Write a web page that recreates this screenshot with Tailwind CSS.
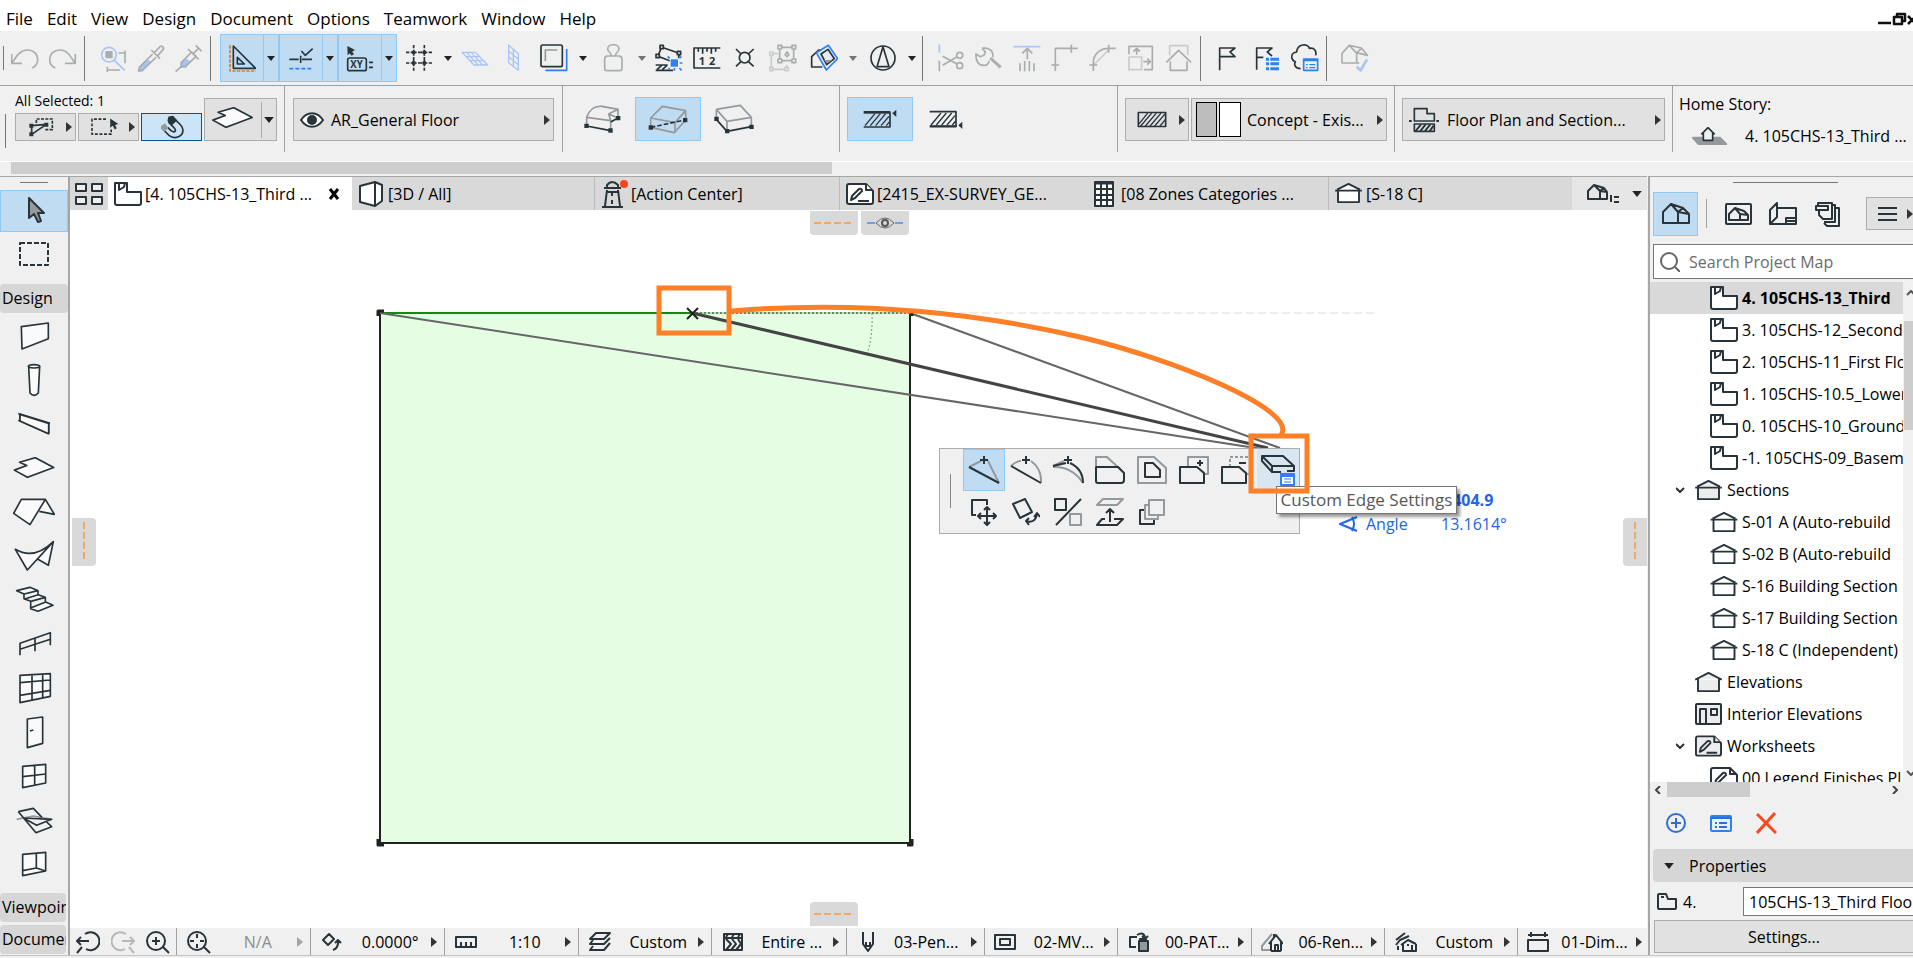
<!DOCTYPE html>
<html lang="en">
<head>
  <meta charset="UTF-8">
  <meta name="viewport" content="width=device-width, initial-scale=1.0">
  <title>Floor Plan</title>
  <script src="https://cdn.jsdelivr.net/npm/@tailwindcss/browser@4"></script>
</head>
<body class="h-screen flex flex-col overflow-hidden bg-[#f0f0f0] text-black text-base leading-6 whitespace-nowrap font-['Open_Sans','Noto_Sans',sans-serif] fill-none stroke-[#28343a] stroke-[5] [stroke-linejoin:round]">

  <!-- Shared icons -->
  <svg class="hidden">
    <symbol id="down" viewBox="0 0 8 5"><path d="M0 0H8L4 5Z" fill="#222" stroke="none"/></symbol>
    <symbol id="right" viewBox="0 0 6 10"><path d="M0 0L6 5L0 10Z" fill="#333" stroke="none"/></symbol>
    <symbol id="story" viewBox="0 0 28 24"><path d="M1 1H13V10H27V21Q27 23 25 23H3Q1 23 1 21Z" fill="#fff" stroke-width="2"/><path d="M5 1V8L10 5L11 1" stroke-width="2"/></symbol>
    <symbol id="section" viewBox="0 0 28 22"><path d="M3 8V20H25V8" stroke-width="2"/><path d="M0 8H28M2 7L14 1L26 7" stroke-width="2"/></symbol>
    <symbol id="sheet" viewBox="0 0 28 22"><path d="M3 1H20L27 8V19Q27 21 25 21H3Q1 21 1 19V3Q1 1 3 1Z" stroke-width="2"/><path d="M20 1V7H26M12 18H23" stroke-width="2"/><path d="M5 17L6 13L13 6Q16 5 16 8L9 15Z" stroke-width="2"/></symbol>
    <symbol id="home" viewBox="0 0 28 21"><path d="M1 20V9L9 1L16 9V20ZM9 1L21 5L27 11V20H16M16 9L27 11M16 9L21 5" stroke-width="2"/></symbol>
    <symbol id="slab" viewBox="40 738 124 64"><path d="M42 778L80 764L58 754L106 740L162 770L82 800Z" fill="#fafafa"/></symbol>
  </svg>

  <!-- Menu bar -->
  <header class="h-[31px] shrink-0 bg-white flex items-center justify-between pt-[6px] text-[17px]">
    <nav class="flex gap-[14px] pl-[6px]">
      <a href="#">File</a>
      <a href="#">Edit</a>
      <a href="#">View</a>
      <a href="#">Design</a>
      <a href="#">Document</a>
      <a href="#">Options</a>
      <a href="#">Teamwork</a>
      <a href="#">Window</a>
      <a href="#">Help</a>
    </nav>
    <button aria-label="Window controls">
      <svg class="w-[35px] h-4" viewBox="0 0 35 16"><path d="M0 12H13M16 6H24V13H16ZM19 6V3H27V10H24M30 5L38 13M38 5L30 13" stroke="#111" stroke-width="2.5"/></svg>
    </button>
  </header>

  <!-- Toolbar -->
  <div class="h-[54px] shrink-0 flex items-center">
    <div class="w-[6px] pl-[3px]"><div class="w-px h-6 bg-[#777]"></div></div>
    <button aria-label="Undo" class="w-[38px] h-12 grid place-items-center"><svg class="size-7 stroke-[#a9adae]" viewBox="33 132 84 84"><path d="M35 162V190H66M36 189C50 168 60 150 82 150C100 150 113 162 113 178C113 190 106 200 96 204"/></svg></button>
    <button aria-label="Redo" class="w-[38px] h-12 grid place-items-center"><svg class="size-7 stroke-[#a9adae]" viewBox="147 132 84 84"><path d="M226 162V190H195M225 189C211 168 200 150 182 150C162 150 149 162 149 178C149 190 155 200 166 204"/></svg></button>
    <div class="w-3 pl-[2px]"><div class="w-px h-[45px] bg-[#777]"></div></div>
    <button aria-label="Find and select" class="w-[38px] h-12 grid place-items-center"><svg class="size-7 stroke-[#a9adae]" viewBox="297 132 84 84"><circle cx="327" cy="164" r="22" stroke="#a8c5f5"/><path d="M343 181L374 211" stroke="#a8c5f5"/><rect x="316" y="153" width="22" height="22" rx="3" fill="#a9adae" stroke="none"/><path d="M356 159H376M375 152V190M322 210H360M322 200V216"/></svg></button>
    <button aria-label="Pick up parameters" class="w-[38px] h-12 grid place-items-center"><svg class="size-7 stroke-[#a9adae]" viewBox="411 132 84 84"><path d="M416 213L420 201L440 180L450 186L426 212Z" fill="#a8c5f5" stroke="#a8c5f5"/><path d="M458 162L418 202L416 213L427 211L468 172M454 150L480 176M463 158L478 142C484 134 494 142 489 149L473 167"/></svg></button>
    <button aria-label="Inject parameters" class="w-[38px] h-12 grid place-items-center"><svg class="size-7 stroke-[#a9adae]" viewBox="525 132 84 84"><path d="M543 201L544 188L556 178L570 186L556 201Z" fill="#a8c5f5" stroke="#a8c5f5"/><path d="M527 215L544 199M544 199V188L575 156L588 169L556 200H544M564 147L596 178M580 161L598 143M587 136L605 154"/></svg></button>
    <div class="w-3 pl-[2px]"><div class="w-px h-[45px] bg-[#777]"></div></div>

    <div class="flex h-12 w-[59px] bg-[#c0dcf3] border border-[#90c8f6]">
      <button aria-label="Guide lines" class="w-[42px] grid place-items-center"><svg class="size-7" viewBox="685 132 84 84"><path d="M701 138L768 205H701ZM713 172L734 192H713Z"/><path d="M691 136V213H770" stroke="#df7b22" stroke-dasharray="10 4"/></svg></button>
      <button aria-label="Guide line options" class="flex-1 grid place-items-center border-l border-[#90c8f6]"><svg class="w-2 h-[5px]"><use href="#down"/></svg></button>
    </div>
    <div class="flex h-12 w-[59px] bg-[#c0dcf3] border border-[#90c8f6]">
      <button aria-label="Snap guides" class="w-[42px] grid place-items-center"><svg class="size-7" viewBox="865 132 84 84"><path d="M872 178H900M910 178H940M906 167V189M908 153L920 166L942 146"/><path d="M872 206H944" stroke="#2f80f5" stroke-dasharray="12 6"/></svg></button>
      <button aria-label="Snap guide options" class="flex-1 grid place-items-center border-l border-[#90c8f6]"><svg class="w-2 h-[5px]"><use href="#down"/></svg></button>
    </div>
    <div class="flex h-12 w-[59px] bg-[#c0dcf3] border border-[#90c8f6]">
      <button aria-label="Coordinates" class="w-[42px] grid place-items-center"><svg class="size-7" viewBox="1045 132 84 84"><path d="M1049 138L1050 166L1056 160L1062 167L1069 162L1063 155L1072 150Z" fill="#28343a" stroke="none"/><rect x="1050" y="174" width="56" height="38" rx="6"/><text x="1058" y="203" font-size="29" font-weight="700" fill="#28343a" stroke="none">XY</text><path d="M1114 187H1126M1114 202H1126"/></svg></button>
      <button aria-label="Coordinate options" class="flex-1 grid place-items-center border-l border-[#90c8f6]"><svg class="w-2 h-[5px]"><use href="#down"/></svg></button>
    </div>
    <button aria-label="Grid display" class="w-[43px] h-12 grid place-items-center"><svg class="size-7" viewBox="1217 134 84 84"><path d="M1220 159H1298M1220 191H1298M1243 137V214M1275 137V214" stroke-dasharray="10 4 18 4 14 4"/><path d="M1238 154h10v10h-10zM1270 154h10v10h-10zM1238 186h10v10h-10zM1270 186h10v10h-10z" fill="#28343a" stroke="none"/></svg></button>
    <button aria-label="Grid options" class="w-4 h-12 grid place-items-center"><svg class="w-2 h-[5px]"><use href="#down"/></svg></button>
    <button aria-label="Editing plane" class="w-[38px] h-12 grid place-items-center"><svg class="size-7 stroke-[#a8c5f5] stroke-[4]" viewBox="1383 134 84 84"><path d="M1386 159H1426L1463 197H1422ZM1398 172H1438M1409 184H1450M1400 159L1434 197M1413 159L1448 197"/></svg></button>
    <button aria-label="Vertical plane" class="w-[38px] h-12 grid place-items-center"><svg class="size-7 stroke-[#a8c5f5] stroke-[4]" viewBox="58 134 84 84"><path d="M87 137L116 163V213L87 190ZM101 150V202M87 155L116 180M87 172L116 197"/></svg></button>
    <button aria-label="Trace" class="w-[43px] h-12 grid place-items-center"><svg class="size-7" viewBox="182 134 84 84"><path d="M262 149V213H198" stroke="#2f80f5"/><rect x="185" y="137" width="64" height="65" rx="5"/><path d="M198 185V152H234" stroke="#93999c"/></svg></button>
    <button aria-label="Trace options" class="w-4 h-12 grid place-items-center"><svg class="w-2 h-[5px]"><use href="#down"/></svg></button>
    <button aria-label="Gravity" class="w-[43px] h-12 grid place-items-center"><svg class="size-7 stroke-[#a9adae]" viewBox="358 134 84 84"><path d="M384 170H418Q427 170 427 180V207Q427 214 420 214H382Q375 214 375 207V180Q375 170 384 170M394 168C396 160 384 158 384 149C384 132 418 132 418 149C418 158 406 160 408 168"/></svg></button>
    <button aria-label="Gravity options" class="w-4 h-12 grid place-items-center"><svg class="w-2 h-[5px] opacity-60"><use href="#down"/></svg></button>
    <button aria-label="Snap points" class="w-[38px] h-12 grid place-items-center"><svg class="size-7" viewBox="524 134 84 84"><path d="M535 165L542 148M549 145L592 160M537 172L568 184M597 166L594 176"/><path d="M527 165h10v10h-10zM539 138h10v10h-10zM591 156h10v10h-10z" fill="#f0f0f0"/><path d="M526 197H562M526 213H578M530 211L544 198M546 211L560 198"/><rect x="571" y="180" width="22" height="22" fill="#2f80f5" stroke="none"/><path d="M568 177L562 171M597 177L603 171M598 191H606M597 206L604 213M582 206V214M568 206L564 210" stroke="#2f80f5"/></svg></button>
    <button aria-label="Measure" class="w-[38px] h-12 grid place-items-center"><svg class="size-7" viewBox="638 134 84 84"><path d="M720 146H641V206H720M654 146V157M667 146V163M680 146V157M693 146V163M706 146V157"/><text x="655" y="198" font-size="33" font-weight="700" fill="#28343a" stroke="none">1</text><text x="686" y="198" font-size="33" font-weight="700" fill="#28343a" stroke="none">2</text></svg></button>
    <button aria-label="Intersection" class="w-[38px] h-12 grid place-items-center"><svg class="size-7" viewBox="752 134 84 84"><circle cx="793" cy="175" r="16"/><path d="M767 149L782 164M820 149L804 164M767 201L782 187M820 201L804 187"/></svg></button>
    <button aria-label="Group" class="w-[38px] h-12 grid place-items-center"><svg class="size-7 stroke-[#a9adae]" viewBox="866 134 84 84"><path d="M873 168V206M878 210H915M879 163H893M919 206V196" stroke="#c9cbcc"/><path d="M868 158h10v10h-10zM868 204h10v10h-10zM914 204h10v10h-10z" stroke="#c9cbcc"/><path d="M903 144H935M898 150V178M903 184H935M940 150V178M893 138h11v11h-11zM935 138h11v11h-11zM893 179h11v11h-11zM935 179h11v11h-11zM914 166L920 158L926 166L920 172Z"/></svg></button>
    <button aria-label="3D window" class="w-[43px] h-12 grid place-items-center"><svg class="size-7" viewBox="993 134 84 84"><path d="M1030 203H998V172L1019 152H1040M1019 152L1030 166"/><path d="M1012 160L1048 138L1076 178L1042 212Z" stroke="#2f80f5" fill="#e3ecf8"/><path d="M1026 164L1047 150L1066 178L1043 196Z"/><path d="M1034 182H1060L1044 192Z" fill="#93999c" stroke="none"/></svg></button>
    <button aria-label="3D options" class="w-4 h-12 grid place-items-center"><svg class="w-2 h-[5px] opacity-60"><use href="#down"/></svg></button>
    <button aria-label="Orientation" class="w-[43px] h-12 grid place-items-center"><svg class="size-7" viewBox="1168 134 84 84"><circle cx="1210" cy="176" r="36"/><path d="M1210 142L1192 202H1228Z"/></svg></button>
    <button aria-label="Orientation options" class="w-4 h-12 grid place-items-center"><svg class="w-2 h-[5px]"><use href="#down"/></svg></button>
    <div class="w-3 pl-[2px]"><div class="w-px h-[45px] bg-[#777]"></div></div>

    <button aria-label="Split" class="w-[38px] h-12 grid place-items-center"><svg class="size-7 stroke-[#a9adae]" viewBox="-69 134 84 84"><path d="M-62 135V160" stroke="#a8c5f5"/><path d="M-62 184V216M-52 171L-10 193M-52 198L-10 173"/><circle cx="-1" cy="168" r="9"/><circle cx="-1" cy="199" r="9"/></svg></button>
    <button aria-label="Adjust" class="w-[38px] h-12 grid place-items-center"><svg class="size-7 stroke-[#a9adae]" viewBox="45 134 84 84"><path d="M66 147L76 157L72 168L60 172L48 164C46 184 56 200 74 198C80 198 86 190 88 184M66 147C86 144 100 152 99 174"/><path d="M91 176L122 204" stroke-width="9"/></svg></button>
    <button aria-label="Trim" class="w-[38px] h-12 grid place-items-center"><svg class="size-7 stroke-[#a9adae]" viewBox="159 134 84 84"><path d="M161 142H241" stroke="#a8c5f5"/><path d="M202 180V147M187 162L202 147L217 162M180 216V192M194 216V185M208 216V185M222 216V192"/></svg></button>
    <button aria-label="Intersect" class="w-[38px] h-12 grid place-items-center"><svg class="size-7 stroke-[#a9adae]" viewBox="273 134 84 84"><path d="M286 215V147H353M334 136V160M274 197H298"/></svg></button>
    <button aria-label="Fillet" class="w-[38px] h-12 grid place-items-center"><svg class="size-7 stroke-[#a9adae]" viewBox="387 134 84 84"><path d="M404 194L446 152" stroke="#c9cbcc"/><path d="M400 215V190C400 165 420 147 446 147H467M446 136V160M388 197H412"/></svg></button>
    <button aria-label="Resize" class="w-[38px] h-12 grid place-items-center"><svg class="size-7 stroke-[#a9adae]" viewBox="501 134 84 84"><rect x="507" y="173" width="38" height="38" stroke="#c9cbcc"/><path d="M507 165V141H577V211H552M530 166V147M520 157L530 147L540 157M550 187H571M562 178L571 187L562 196"/></svg></button>
    <button aria-label="Roof level" class="w-[38px] h-12 grid place-items-center"><svg class="size-7 stroke-[#a9adae]" viewBox="615 134 84 84"><path d="M629 168V139H683V168" stroke="#c9cbcc"/><path d="M619 189L656 153L693 189M631 186V213H681V186"/></svg></button>
    <div class="w-3 pl-[2px]"><div class="w-px h-[45px] bg-[#777]"></div></div>
    <button aria-label="Issue" class="w-[38px] h-12 grid place-items-center"><svg class="size-7" viewBox="763 134 84 84"><path d="M777 213V146H823L808 158L823 172H778"/></svg></button>
    <button aria-label="Issue organizer" class="w-[38px] h-12 grid place-items-center"><svg class="size-7" viewBox="879 134 84 84"><path d="M890 211V146H936L922 158L936 170M890 174H910"/><path d="M918 175h9v9h-9zM931 175h26v9h-26zM918 189h9v9h-9zM931 189h26v9h-26zM918 204h9v9h-9zM931 204h26v9h-26z" fill="#2f80f5" stroke="none"/></svg></button>
    <button aria-label="BIMcloud" class="w-[38px] h-12 grid place-items-center"><svg class="size-7" viewBox="993 134 84 84"><path d="M1022 208C1004 208 1002 194 1006 188C990 180 992 160 1010 158C1012 132 1044 132 1048 147C1064 144 1070 156 1067 168"/><path d="M1031 179H1073V213H1031ZM1031 183H1073" stroke="#2f80f5"/><path d="M1038 196H1043M1048 196H1066M1038 205H1043M1048 205H1066" stroke="#2f80f5" stroke-width="4"/></svg></button>
    <div class="w-3 pl-[2px]"><div class="w-px h-[45px] bg-[#777]"></div></div>
    <button aria-label="Check model" class="w-[38px] h-12 grid place-items-center"><svg class="size-7 stroke-[#a9adae]" viewBox="1143 134 84 84"><path d="M1146 191V162L1168 138L1190 162V191ZM1168 138L1204 146L1222 168L1190 160M1190 160L1204 148M1190 191H1198"/><path d="M1190 202L1202 213L1221 180" stroke="#a8c5f5" stroke-width="8"/></svg></button>
  </div>

  <!-- Info box -->
  <div class="h-[76px] shrink-0 border-t border-[#a0a0a0] flex">
    <section class="w-[285px] h-[66px] border-r border-[#a0a0a0] flex items-end pb-[11px] pl-[5px] shrink-0">
      <div class="w-px h-[34px] bg-[#777] mr-[9px] -mb-[7px]"></div>
      <div>
        <p class="text-[14px] leading-5">All Selected: 1</p>
        <div class="flex gap-[2px] mt-[2px]">
          <button aria-label="Multiple selection" class="w-[61px] h-7 bg-[#e1e1e1] border border-[#adadad] flex items-center justify-between pl-3 pr-[3px]"><svg class="w-[26px] h-5" viewBox="82 350 76 60"><path d="M106 368V356H154V388H130" stroke-dasharray="9 4"/><path d="M91 376L136 372L92 402V376"/><path d="M85 370h12v12h-12zM130 367h12v12h-12zM85 396h12v12h-12z" fill="#28343a" stroke="none"/></svg><svg class="w-[6px] h-[10px]"><use href="#right"/></svg></button>
          <button aria-label="Selection mode" class="w-[61px] h-7 bg-[#e1e1e1] border border-[#adadad] flex items-center justify-between pl-3 pr-[3px]"><svg class="w-[28px] h-5" viewBox="272 350 86 60"><path d="M318 356H275V402H334V388" stroke-dasharray="9 5"/><path d="M331 354V382L339 376L345 388L351 384L346 374L356 371Z" fill="#28343a" stroke="none"/></svg><svg class="w-[6px] h-[10px]"><use href="#right"/></svg></button>
          <button aria-label="Magnet" class="w-[61px] h-7 bg-[#cce4f7] border border-[#005499] grid place-items-center"><svg class="w-[26px] h-6" viewBox="476 345 78 72"><path d="M490 390L506 406C522 420 552 410 547 386C546 380 542 376 538 372L524 358M504 366L520 382C530 392 524 400 512 392L502 382" /><path d="M506 352L518 350L527 361L514 373L504 362Z" fill="#28343a"/><path d="M482 378L494 370L504 384L492 396L482 386Z" fill="#93999c" stroke="none"/></svg></button>
        </div>
      </div>
      <button aria-label="Slab tool" class="ml-[2px] w-[73px] h-[43px] bg-[#e1e1e1] border border-[#adadad] flex items-center pl-[7px] shrink-0"><svg class="w-[41px] h-[21px] mb-1"><use href="#slab"/></svg><span class="w-px h-9 bg-[#adadad] ml-2 mr-[2px]"></span><svg class="w-[10px] h-[6px]"><use href="#down"/></svg></button>
    </section>

    <section class="w-[278px] h-[66px] border-r border-[#a0a0a0] flex items-end pb-[11px] px-2 shrink-0">
      <button class="w-full h-[43px] bg-[#e1e1e1] border border-[#adadad] flex items-center pl-[6px] pr-[3px]">
        <svg class="w-6 h-4" viewBox="0 0 24 16"><path d="M1 8C7 -1 17 -1 23 8C17 17 7 17 1 8Z" fill="#fff" stroke-width="2"/><circle cx="12" cy="8" r="5" fill="#28343a" stroke="none"/></svg>
        <span class="flex-1 text-left pl-[7px]">AR_General Floor</span>
        <svg class="w-[6px] h-[10px]"><use href="#right"/></svg>
      </button>
    </section>

    <section class="w-[277px] h-[66px] border-r border-[#a0a0a0] flex items-end pb-[11px] pl-[6px] shrink-0">
      <button aria-label="Vertical edge" class="w-[66px] h-11 grid place-items-center"><svg class="w-[38px] h-[30px]" viewBox="308 316 112 90"><path d="M318 356C328 326 350 322 364 323L412 332V358L384 346L390 366V394M318 356L390 366M318 356V380M412 332L384 346" stroke="#93999c"/><path d="M318 382L390 396M390 370L412 358"/><path d="M311 375h13v13h-13zM383 389h13v13h-13zM406 352h13v13h-13z" fill="#28343a" stroke="none"/></svg></button>
      <button aria-label="Angled edge" class="w-[66px] h-11 grid place-items-center bg-[#c0dcf3] border border-[#90c8f6]"><svg class="w-[40px] h-[30px]" viewBox="503 316 120 90"><path d="M511 358L546 323L616 336L584 372ZM511 358V386L582 402L616 364V336M584 372V402" stroke="#93999c"/><path d="M511 386L614 364" stroke-dasharray="14 6"/><path d="M505 380h13v13h-13zM608 358h13v13h-13z" fill="#28343a" stroke="none"/></svg></button>
      <button aria-label="Custom edge" class="w-[66px] h-11 grid place-items-center"><svg class="w-[40px] h-[30px]" viewBox="701 314 120 90"><path d="M708 330L780 318L813 354V382M708 330V358M708 330L740 366L813 354M740 366V394" stroke="#93999c"/><path d="M708 360L740 396L813 382"/><path d="M702 352h13v13h-13zM734 389h13v13h-13zM807 376h13v13h-13z" fill="#28343a" stroke="none"/></svg></button>
    </section>

    <section class="w-[278px] h-[66px] border-r border-[#a0a0a0] flex items-end pb-[11px] pl-[7px] shrink-0">
      <button aria-label="Reference plane top" class="w-[66px] h-11 grid place-items-center bg-[#c0dcf3] border border-[#90c8f6]"><svg class="w-[34px] h-[20px]" viewBox="1148 330 102 60"><path d="M1150 384H1229V340"/><path d="M1150 340H1230" stroke-width="8"/><path d="M1154 380L1184 344M1170 380L1200 344M1186 380L1216 344M1202 380L1226 352M1218 380L1228 368" stroke-width="4"/><path d="M1248 332V354L1236 343Z" fill="#28343a" stroke="none"/></svg></button>
      <button aria-label="Reference plane bottom" class="w-[66px] h-11 grid place-items-center"><svg class="w-[34px] h-[20px]" viewBox="1346 330 102 60"><path d="M1348 338H1427V384"/><path d="M1348 382H1428" stroke-width="7"/><path d="M1352 378L1382 342M1368 378L1398 342M1384 378L1414 342M1400 378L1424 350M1416 378L1426 366" stroke-width="4"/><path d="M1446 368V390L1434 379Z" fill="#28343a" stroke="none"/></svg></button>
    </section>

    <section class="w-[277px] h-[66px] border-r border-[#a0a0a0] flex items-end pb-[11px] pl-[7px] gap-[2px] shrink-0">
      <button aria-label="Structure" class="w-[64px] h-[43px] bg-[#e1e1e1] border border-[#adadad] flex items-center justify-between pl-[11px] pr-[3px]"><svg class="w-[30px] h-[17px]" viewBox="530 330 90 50"><rect x="534" y="334" width="82" height="42"/><path d="M536 368L562 336M540 376L574 336M554 376L588 336M568 376L602 336M582 376L614 338M598 376L616 354" stroke-width="4"/></svg><svg class="w-[6px] h-[10px]"><use href="#right"/></svg></button>
      <button class="w-[196px] h-[43px] bg-[#e1e1e1] border border-[#adadad] flex items-center pl-1 pr-[3px]">
        <span class="w-[21px] h-[35px] border border-black bg-[#bdbdbd]"></span>
        <span class="w-[22px] h-[35px] border border-black bg-white ml-[2px]"></span>
        <span class="flex-1 text-left pl-[6px]">Concept - Exis...</span>
        <svg class="w-[6px] h-[10px]"><use href="#right"/></svg>
      </button>
    </section>

    <section class="w-[278px] h-[66px] border-r border-[#a0a0a0] flex items-end pb-[11px] px-[7px] shrink-0">
      <button class="w-full h-[43px] bg-[#e1e1e1] border border-[#adadad] flex items-center pl-[6px] pr-[3px]">
        <svg class="w-[30px] h-[26px]" viewBox="1348 318 90 78"><path d="M1364 360V323H1402V338H1424V360Z"/><rect x="1364" y="369" width="60" height="22"/><path d="M1368 390L1384 370M1382 390L1398 370M1396 390L1412 370M1410 390L1422 374M1348 360H1356M1430 360H1438" stroke-width="6"/></svg>
        <span class="flex-1 text-left pl-2">Floor Plan and Section...</span>
        <svg class="w-[6px] h-[10px]"><use href="#right"/></svg>
      </button>
    </section>

    <section class="flex-1 pl-[6px] pt-[6px]">
      <p>Home Story:</p>
      <div class="flex items-center gap-[18px] pl-[13px] mt-2">
        <svg class="w-[35px] h-[18px]" viewBox="778 380 105 54"><path d="M780 412H862L882 432H798Z" fill="#93999c" stroke="#93999c"/><path d="M806 402L826 382L846 402M812 398V420H840V398" fill="#f0f0f0"/></svg>
        <span>4. 105CHS-13_Third ...</span>
      </div>
    </section>
  </div>

  <!-- Info box scrollbar -->
  <div class="h-[15px] shrink-0 border-t border-white pl-[11px] pb-[2px]"><div class="w-[821px] h-3 bg-[#cdcdcd]"></div></div>

  <div class="flex-1 min-h-0 flex border-b border-[#c4c4c4] mb-[2px]">
    <!-- Toolbox -->
    <aside class="w-[70px] shrink-0 border-t border-r-2 border-[#a6a6a6] flex flex-col overflow-hidden">
      <div class="w-7 h-px bg-[#777] ml-5 mt-[5px] mb-[7px] shrink-0"></div>
      <button aria-label="Arrow" class="h-[42px] w-[68px] shrink-0 bg-[#c0dcf3] border border-[#90c8f6] flex items-center justify-center pl-1"><svg class="w-[17px] h-7" viewBox="0 0 17 28"><path d="M1 1V21L6 17L10 25L13 24L10 16H16Z" fill="#93999c" stroke-width="2"/></svg></button>
      <button aria-label="Marquee" class="h-[52px] shrink-0 flex items-center justify-center pb-2"><svg class="w-[30px] h-6" viewBox="0 0 30 24"><rect x="1" y="1" width="28" height="22" stroke-width="2" stroke-dasharray="5 2"/></svg></button>
      <h2 class="h-[29px] shrink-0 bg-[#d6d6d6] rounded-sm pl-[2px] leading-[29px]">Design</h2>
      <button aria-label="Wall" class="h-11 shrink-0 grid place-items-center"><svg class="w-[42px] h-11" viewBox="39 309 126 132"><path d="M64 350L145 339V386L66 417Z" fill="#fafafa"/></svg></button>
      <button aria-label="Column" class="h-11 shrink-0 grid place-items-center"><svg class="w-[42px] h-11" viewBox="39 444 126 132"><path d="M86 472L90 552Q102 566 115 552L119 472" fill="#fafafa"/><ellipse cx="102" cy="472" rx="17" ry="5"/></svg></button>
      <button aria-label="Beam" class="h-11 shrink-0 grid place-items-center"><svg class="w-[42px] h-11" viewBox="39 574 126 132"><path d="M55 612L150 641M55 632L146 672M60 614V634M146 640V672" fill="#fafafa"/><path d="M60 614L146 641V672L60 634Z" fill="#fafafa"/></svg></button>
      <button aria-label="Slab" class="h-11 shrink-0 grid place-items-center"><svg class="w-[42px] h-[21px]"><use href="#slab"/></svg></button>
      <button aria-label="Roof" class="h-11 shrink-0 grid place-items-center"><svg class="w-[42px] h-11" viewBox="39 837 126 132"><path d="M41 910L64 868H136L90 944ZM136 868L163 913L118 904" fill="#fafafa"/></svg></button>
      <button aria-label="Shell" class="h-11 shrink-0 grid place-items-center"><svg class="w-[42px] h-11" viewBox="39 969 126 132"><path d="M46 1018C80 1038 120 1034 160 995L82 1080ZM160 995L145 1066L114 1048" fill="#fafafa"/></svg></button>
      <button aria-label="Stair" class="h-11 shrink-0 grid place-items-center"><svg class="w-[42px] h-11" viewBox="39 51 126 132"><path d="M50 92L90 82L114 92L72 102ZM72 102V116L92 124V146L114 154L159 136L137 126L92 144M114 92V104L72 118M114 104L136 112L92 124M136 112V126" fill="#fafafa"/></svg></button>
      <button aria-label="Railing" class="h-11 shrink-0 grid place-items-center"><svg class="w-[42px] h-11" viewBox="39 183 126 132"><path d="M60 286V250L151 218V256M60 268L151 238M105 234V274"/></svg></button>
      <button aria-label="Curtain wall" class="h-11 shrink-0 grid place-items-center"><svg class="w-[42px] h-11" viewBox="39 315 126 132"><path d="M60 346L151 341V409L60 428ZM60 368L151 360M60 406L151 391M96 344V420M128 342V414" fill="#fafafa"/></svg></button>
      <button aria-label="Door" class="h-11 shrink-0 grid place-items-center"><svg class="w-[42px] h-11" viewBox="39 448 126 132"><path d="M82 478L128 472V551L82 564ZM90 514L100 511" fill="#fafafa"/></svg></button>
      <button aria-label="Window" class="h-11 shrink-0 grid place-items-center"><svg class="w-[42px] h-11" viewBox="39 579 126 132"><path d="M68 619L137 613V669L68 683ZM104 616V676M68 650L137 642" fill="#fafafa"/></svg></button>
      <button aria-label="Skylight" class="h-11 shrink-0 grid place-items-center"><svg class="w-[42px] h-11" viewBox="39 711 126 132"><path d="M50 778L100 768L155 778" stroke="#93999c"/><path d="M55 755L100 745L126 772M55 755L108 818L155 800L140 786M70 774L155 778L110 796L70 774"/></svg></button>
      <button aria-label="Opening" class="h-11 shrink-0 grid place-items-center"><svg class="w-[42px] h-11" viewBox="39 843 126 132"><path d="M68 883L137 877V933L68 947ZM109 880V924L68 932M109 924L137 933" fill="#fafafa"/></svg></button>
      <h2 class="h-[29px] shrink-0 bg-[#d6d6d6] rounded-sm pl-[2px] mt-2 leading-[29px] w-[66px] overflow-hidden">Viewpoint</h2>
      <h2 class="h-[29px] shrink-0 bg-[#d6d6d6] rounded-sm pl-[2px] mt-[3px] leading-[29px] w-[66px] overflow-hidden">Document</h2>
    </aside>

    <!-- Drawing window -->
    <main class="flex-1 min-w-0 flex flex-col bg-white">
      <div class="h-[34px] shrink-0 border-t border-[#a6a6a6] bg-[#d9d9d9] flex">
        <button aria-label="Tab overview" class="w-[38px] grid place-items-center"><svg class="w-7 h-[22px]" viewBox="0 0 28 22"><path d="M1 1H11V8H1ZM17 1H27V8H17ZM1 14H11V21H1ZM17 14H27V21H17Z" fill="#eee" stroke-width="2"/></svg></button>
        <div class="w-[244px] bg-white flex items-center pl-[6px] pr-3">
          <svg class="w-7 h-6"><use href="#story"/></svg>
          <a href="#" class="flex-1 pl-[3px]">[4. 105CHS-13_Third ...</a>
          <button aria-label="Close tab"><svg class="size-3" viewBox="0 0 12 12"><path d="M2 1L10 11M10 1L2 11" stroke="#000" stroke-width="3"/></svg></button>
        </div>
        <a href="#" class="w-[243px] border-r border-[#bbb] flex items-center gap-1 pl-[6px]"><svg class="w-[26px] h-[26px]" viewBox="0 0 26 26"><path d="M2 5L17 1L24 4V20L17 25L2 21ZM17 1V25" fill="#fff" stroke-width="2"/></svg>[3D / All]</a>
        <a href="#" class="w-[245px] border-r border-[#bbb] flex items-center gap-[3px] pl-[6px]"><svg class="w-[27px] h-[28px]" viewBox="0 0 27 28"><path d="M3 8H20M6 8V5Q11 -1 17 5V8M6 10L4 26M17 10L19 26M1 27H22M11 12V16M11 20V24M5 12H18" stroke-width="2"/><circle cx="23" cy="4" r="4" fill="#fb4516" stroke="none"/></svg>[Action Center]</a>
        <a href="#" class="w-[247px] flex items-center gap-[3px] pl-[6px]"><svg class="w-7 h-[22px] fill-white"><use href="#sheet"/></svg>[2415_EX-SURVEY_GE...</a>
        <a href="#" class="w-[242px] border-r border-[#bbb] flex items-center gap-[7px] pl-[7px]"><svg class="w-5 h-[26px]" viewBox="0 0 20 26"><path d="M1 1H19V25H1ZM1 8H19M1 14H19M1 19H19M7 1V25M13 1V25" fill="#fff" stroke-width="2"/><path d="M1 2H19" stroke-width="3"/></svg>[08 Zones Categories ...</a>
        <a href="#" class="flex-1 flex items-center gap-1 pl-[6px]"><svg class="w-[27px] h-[21px] fill-white"><use href="#section"/></svg>[S-18 C]</a>
        <button aria-label="Tab options" class="w-[75px] bg-[#e6e6e6] flex items-center gap-[13px] pl-[15px]"><svg class="w-8 h-5" viewBox="0 0 32 20"><path d="M1 15V7L7 1L13 7V15ZM7 1L17 4L20 8V15H13M13 7L20 8M13 7L17 4M24 11V18M27 13H32M27 18H32" stroke-width="2"/></svg><svg class="w-[10px] h-[6px]"><use href="#down"/></svg></button>
      </div>

      <div class="relative flex-1 min-h-0 overflow-hidden">
        <svg class="absolute inset-0 size-full">
          <g transform="translate(-70 -211)">
            <rect x="380" y="314" width="530" height="530" fill="#e5fde3" stroke="#222" stroke-width="2"/>
            <path d="M380 314H692" stroke="#128a12" stroke-width="2"/>
            <path d="M692 314H910" stroke="#b5e8b5" stroke-width="2"/>
            <path d="M692 314H910" stroke="#222" stroke-width="1" stroke-dasharray="2 2"/>
            <path d="M910 314H1376" stroke="#ddd" stroke-width="1" stroke-dasharray="8 4"/>
            <path d="M872 314Q873 336 867 356" stroke="#888" stroke-width="1" stroke-dasharray="2 2"/>
            <path d="M380 314L1262 450M910 314L1280 449" stroke="#666" stroke-width="2"/>
            <path d="M692 314L1268 449" stroke="#444" stroke-width="3"/>
            <path d="M687 309L698 320M698 309L687 320" stroke="#222" stroke-width="2"/>
            <path d="M378 317V312H384M912 317V312H907M378 840V846H384M912 840V846H907" stroke="#222" stroke-width="3"/>
          </g>
        </svg>

        <!-- Pane handles -->
        <div class="absolute top-[1px] left-1/2 -ml-[49px] flex gap-[3px]">
          <div class="w-12 h-6 rounded-b bg-[#d9d9d9] grid place-items-center"><svg class="w-10 h-[2px]"><path d="M0 1H40" stroke="#f2a968" stroke-width="2" stroke-dasharray="7 3"/></svg></div>
          <div class="w-12 h-6 rounded-b bg-[#d9d9d9] grid place-items-center"><svg class="w-9 h-3" viewBox="0 0 36 12"><path d="M0 6H8M28 6H36" stroke="#6d9eea" stroke-width="2"/><path d="M9 6Q18 -4 27 6Q18 16 9 6Z" stroke-width="1" stroke="#666"/><circle cx="18" cy="6" r="3" stroke-width="2" stroke="#555"/></svg></div>
        </div>
        <div class="absolute bottom-[2px] left-1/2 -ml-[49px] w-12 h-6 rounded-t bg-[#d9d9d9] grid place-items-center"><svg class="w-10 h-[2px]"><path d="M0 1H40" stroke="#f2a968" stroke-width="2" stroke-dasharray="7 3"/></svg></div>
        <div class="absolute left-[2px] top-[308px] w-6 h-12 rounded-r bg-[#d9d9d9] grid place-items-center"><svg class="w-[2px] h-10"><path d="M1 0V40" stroke="#f2a968" stroke-width="2" stroke-dasharray="7 3"/></svg></div>
        <div class="absolute right-0 top-[308px] w-6 h-12 rounded-l bg-[#d9d9d9] grid place-items-center"><svg class="w-[2px] h-10"><path d="M1 0V40" stroke="#f2a968" stroke-width="2" stroke-dasharray="7 3"/></svg></div>

        <!-- Tracker -->
        <div class="absolute left-[1269px] top-[278px] text-[#2563eb]">
          <p class="pl-[104px] leading-6 font-bold">3404.9</p>
          <p class="flex items-center leading-6"><svg class="w-[19px] h-4 mr-2" viewBox="0 0 19 16"><path d="M18 1L1 8L18 15M13 1Q17 8 13 15" stroke="#2563eb" stroke-width="2"/></svg><span class="w-[75px]">Angle</span><span>13.1614°</span></p>
        </div>

        <!-- Pet palette -->
        <div class="absolute left-[869px] top-[238px] w-[361px] h-[86px] bg-[#f0f0f0] border border-[#adadad] flex stroke-2">
          <div class="w-px h-[34px] bg-[#888] ml-[10px] mt-[25px] mr-[12px]"></div>
          <div class="grid grid-cols-8 auto-rows-[42px] content-start w-[336px] shrink-0">
            <button aria-label="Insert node" class="grid place-items-center bg-[#c0dcf3] border border-[#90c8f6]"><svg class="w-8 h-[30px]" viewBox="0 0 32 30"><path d="M1 12L13 6M20 6L31 28" stroke="#93999c"/><path d="M1 12L31 28M16 1V9M12 5H20"/></svg></button>
            <button aria-label="Curve edge" class="grid place-items-center"><svg class="w-8 h-[30px]" viewBox="0 0 32 30"><path d="M1 11Q6 6 11 6M21 6Q32 14 31 28" stroke="#93999c"/><path d="M1 11L31 28M16 1V9M12 5H20"/></svg></button>
            <button aria-label="Edit using tangent" class="grid place-items-center"><svg class="w-8 h-[30px]" viewBox="0 0 32 30"><path d="M1 11L12 6M1 12Q20 11 31 28" stroke="#93999c"/><path d="M1 11L14 8M18 8Q31 14 31 28M16 1V9M12 5H20"/></svg></button>
            <button aria-label="Offset edge" class="grid place-items-center"><svg class="w-8 h-[30px]" viewBox="0 0 32 30"><path d="M2 11V2H13L26 14" stroke="#93999c"/><path d="M2 12H24L30 18V25Q30 28 27 28H4Q2 28 2 26Z"/></svg></button>
            <button aria-label="Offset all edges" class="grid place-items-center"><svg class="w-8 h-[30px]" viewBox="0 0 32 30"><path d="M2 2H18L30 13V28H2Z" stroke="#93999c"/><path d="M9 8H17L24 15V22H9Z"/></svg></button>
            <button aria-label="Add to polygon" class="grid place-items-center"><svg class="w-8 h-[30px]" viewBox="0 0 32 30"><path d="M10 12V2H30V19H26" stroke="#93999c"/><path d="M2 12H19L26 18V28H2ZM22 5V11M19 8H25"/></svg></button>
            <button aria-label="Subtract from polygon" class="grid place-items-center"><svg class="w-8 h-[30px]" viewBox="0 0 32 30"><path d="M10 12V2H31M30 19H26" stroke="#93999c" stroke-dasharray="3 2"/><path d="M2 12H19L26 18V28H2ZM19 8H26"/></svg></button>
            <button aria-label="Custom edge settings" class="grid place-items-center bg-[#d8e6f2]"><svg class="w-[34px] h-8" viewBox="0 0 34 32"><path d="M1 2H22L33 12H11ZM1 2V7L11 18H20M11 12V18M33 12V17H26"/><path d="M20 20H33V31H20ZM20 22H33" stroke="#2f80f5" fill="#fff"/><path d="M23 25H30M23 28H30" stroke="#2f80f5" stroke-width="1"/></svg></button>
            <button aria-label="Move" class="grid place-items-center"><svg class="w-7 h-7" viewBox="0 0 28 28"><path d="M6 17H2V2H17V7M17 9V27M8 18H26M14 12L17 9L20 12M14 24L17 27L20 24M11 15L8 18L11 21M23 15L26 18L23 21"/></svg></button>
            <button aria-label="Rotate" class="grid place-items-center"><svg class="w-7 h-7" viewBox="0 0 28 28"><path d="M1 6L13 1L20 14L8 20ZM14 23Q23 26 25 16M22 19L25 15L28 19M17 20L14 23L17 27"/></svg></button>
            <button aria-label="Mirror" class="grid place-items-center"><svg class="w-7 h-7" viewBox="0 0 28 28"><path d="M1 1H12V12H1ZM27 1L2 27"/><path d="M16 16H27V27H16Z" stroke="#93999c"/></svg></button>
            <button aria-label="Elevate" class="grid place-items-center"><svg class="w-7 h-7" viewBox="0 0 28 28"><path d="M7 1H27L21 7H1Z" stroke="#93999c"/><path d="M9 21H6L1 27H21L27 21H18M14 24V11M10 15L14 11L18 15"/></svg></button>
            <button aria-label="Multiply" class="grid place-items-center"><svg class="w-7 h-7" viewBox="0 0 28 28"><path d="M7 12H2V26H16V21"/><path d="M11 7H7V21H20V17M11 2H26V17H11Z" stroke="#93999c"/></svg></button>
          </div>
        </div>

        <p class="absolute left-[1206px] top-[276px] w-[181px] h-7 bg-white border border-[#767676] shadow-[3px_3px_3px_rgba(0,0,0,0.4)] text-center text-[17px] leading-[26px] text-[#575757]" role="tooltip">Custom Edge Settings</p>

        <!-- Markup -->
        <svg class="absolute inset-0 size-full pointer-events-none">
          <g transform="translate(-70 -211)" stroke="#fd7f27" stroke-width="5" stroke-linejoin="miter">
            <rect x="659" y="289" width="70" height="45"/>
            <path d="M731 312C840 303 960 310 1080 338C1170 359 1300 411 1281 436"/>
            <rect x="1251" y="437" width="56" height="55"/>
          </g>
        </svg>
      </div>

      <!-- Quick options -->
      <footer class="h-[27px] shrink-0 bg-[#f0f0f0] flex stroke-2">
        <div class="w-[107px] shrink-0 border-r border-[#a0a0a0] flex items-center justify-around">
          <button aria-label="Previous zoom"><svg class="w-6 h-6" viewBox="0 0 24 24"><path d="M9 4A9 9 0 1 1 10 19M6 17L1 23M13 11H1M5 7L1 11L5 15"/></svg></button>
          <button aria-label="Next zoom"><svg class="w-6 h-6 stroke-[#b5b8b9]" viewBox="0 0 24 24"><path d="M15 4A9 9 0 1 0 14 19M18 17L23 23M11 11H23M19 7L23 11L19 15"/></svg></button>
          <button aria-label="Zoom in"><svg class="w-6 h-6" viewBox="0 0 24 24"><circle cx="10" cy="11" r="9"/><path d="M17 17L23 23M10 7V15M6 11H14"/></svg></button>
        </div>
        <button class="flex-1 border-r border-[#a0a0a0] flex items-center pl-[10px] pr-[7px] text-[#8d8d8d]"><svg class="w-6 h-6" viewBox="0 0 24 24"><circle cx="10" cy="11" r="9"/><path d="M17 17L23 23M10 4V8M10 14V18M3 11H7M13 11H17"/></svg><span class="flex-1 pl-2">N/A</span><svg class="w-[6px] h-[10px] opacity-40"><use href="#right"/></svg></button>
        <button class="flex-1 border-r border-[#a0a0a0] flex items-center pl-[11px] pr-[7px]"><svg class="w-5 h-5" viewBox="0 0 20 20"><path d="M1 8L7 2L12 7L6 13ZM11 18Q17 16 16 8M13 11L16 8L19 11"/></svg><span class="flex-1 pl-2">0.0000°</span><svg class="w-[6px] h-[10px]"><use href="#right"/></svg></button>
        <button class="flex-1 border-r border-[#a0a0a0] flex items-center pl-[10px] pr-[7px]"><svg class="w-[22px] h-3" viewBox="0 0 22 12"><path d="M1 1H21V11H1ZM6 6V11M11 6V11M16 6V11"/></svg><span class="flex-1 pl-2">1:10</span><svg class="w-[6px] h-[10px]"><use href="#right"/></svg></button>
        <button class="flex-1 border-r border-[#a0a0a0] flex items-center pl-[10px] pr-[7px]"><svg class="w-[22px] h-5" viewBox="0 0 22 20"><path d="M7 1H21L15 7H1ZM4 8L1 12H15L21 6M4 14L1 18H15L21 11"/></svg><span class="flex-1 pl-2">Custom</span><svg class="w-[6px] h-[10px]"><use href="#right"/></svg></button>
        <button class="flex-1 border-r border-[#a0a0a0] flex items-center pl-[11px] pr-[7px]"><svg class="w-5 h-[18px]" viewBox="0 0 20 18"><path d="M1 1H19V17H1ZM1 5H19M3 17L8 11L3 6M8 17L13 11L9 6M13 17L18 11L15 6M5 1L3 4M11 1L9 4M17 1L15 4"/></svg><span class="flex-1 pl-2">Entire ...</span><svg class="w-[6px] h-[10px]"><use href="#right"/></svg></button>
        <button class="flex-1 border-r border-[#a0a0a0] flex items-center pl-[15px] pr-[7px]"><svg class="w-3 h-5" viewBox="0 0 12 20"><path d="M1 0V12L6 19L11 12V0M4 10V14H8V10"/></svg><span class="flex-1 pl-2">03-Pen...</span><svg class="w-[6px] h-[10px]"><use href="#right"/></svg></button>
        <button class="flex-1 border-r border-[#a0a0a0] flex items-center pl-[9px] pr-[7px]"><svg class="w-[22px] h-4" viewBox="0 0 22 16"><path d="M1 1H21V15H1ZM6 5H16V11H6Z"/></svg><span class="flex-1 pl-2">02-MV...</span><svg class="w-[6px] h-[10px]"><use href="#right"/></svg></button>
        <button class="flex-1 border-r border-[#a0a0a0] flex items-center pl-[11px] pr-[7px]"><svg class="w-5 h-5" viewBox="0 0 20 20"><path d="M7 15H1V5H8M8 3Q15 -1 16 6M13 4L16 7L19 4M11 9V7H17V9"/><rect x="10" y="9" width="9" height="10" fill="#93999c"/></svg><span class="flex-1 pl-2">00-PAT...</span><svg class="w-[6px] h-[10px]"><use href="#right"/></svg></button>
        <button class="flex-1 border-r border-[#a0a0a0] flex items-center pl-[9px] pr-[7px]"><svg class="w-[22px] h-5" viewBox="0 0 22 20"><path d="M11 2L1 14V18H10" stroke="#93999c"/><path d="M10 19V10M20 19V10M8 12L15 3L22 12M13 2V5M10 19H20M14 19V13H17V19"/></svg><span class="flex-1 pl-2">06-Ren...</span><svg class="w-[6px] h-[10px]"><use href="#right"/></svg></button>
        <button class="flex-1 border-r border-[#a0a0a0] flex items-center pl-[10px] pr-[7px]"><svg class="w-[22px] h-5" viewBox="0 0 22 20"><path d="M1 8L10 1M1 13L5 8L14 4M6 13L13 8L21 12M8 12V19H21V12M12 13H14M17 19V13M3 14V18"/></svg><span class="flex-1 pl-2">Custom</span><svg class="w-[6px] h-[10px]"><use href="#right"/></svg></button>
        <button class="w-[129px] shrink-0 flex items-center pl-[9px] pr-[5px]"><svg class="w-[22px] h-5" viewBox="0 0 22 20"><path d="M1 8H21V19H1ZM1 3H21M4 0V5M18 0V5"/></svg><span class="flex-1 pl-1">01-Dim...</span><svg class="w-[6px] h-[10px]"><use href="#right"/></svg></button>
      </footer>
    </main>

    <!-- Navigator -->
    <aside class="w-[265px] shrink-0 ml-px pb-[2px] border-t border-l-2 border-[#a6a6a6] flex flex-col overflow-hidden">
      <div class="w-[105px] h-px bg-[#777] mt-[5px] ml-[83px] shrink-0"></div>
      <div class="h-[61px] shrink-0 flex items-center pl-[3px]">
        <button aria-label="Project map" class="w-[45px] h-[44px] bg-[#c0dcf3] border border-[#90c8f6] grid place-items-center shrink-0"><svg class="w-[28px] h-[21px]"><use href="#home"/></svg></button>
        <span class="w-px h-[29px] bg-[#a0a0a0] ml-2 mr-[9px]"></span>
        <button aria-label="View map" class="w-[45px] grid place-items-center"><svg class="w-[27px] h-[22px]" viewBox="0 0 27 22"><rect x="1" y="1" width="25" height="20" rx="1" stroke-width="2"/><path d="M4 17V11L10 5L15 11V17ZM10 5L19 8L23 12V17H15M15 11L23 12" stroke-width="2"/></svg></button>
        <button aria-label="Layout book" class="w-[45px] grid place-items-center"><svg class="w-[28px] h-[24px]" viewBox="0 0 28 24"><path d="M1 22V8L8 1V15ZM8 6H27V22H1M17 22V16H27M17 19H27" stroke-width="2"/></svg></button>
        <button aria-label="Publisher" class="w-[45px] grid place-items-center"><svg class="w-[25px] h-[26px]" viewBox="0 0 25 26"><path d="M3 5V2H17V18H8L4 14V10M1 5H13V9H1ZM18 4H20V21H9M21 7H24V25H12L9 22" stroke-width="2"/></svg></button>
        <button aria-label="Navigator menu" class="flex-1 h-[33px] ml-4 bg-[#e1e1e1] border border-r-0 border-[#adadad] flex items-center pl-[11px] gap-[10px]"><svg class="w-[19px] h-[14px]" viewBox="0 0 19 14"><path d="M0 1H19M0 7H19M0 13H19" stroke-width="2"/></svg><svg class="w-[6px] h-[10px]"><use href="#right"/></svg></button>
      </div>
      <label class="h-[35px] shrink-0 ml-[3px] bg-white border border-r-0 border-[#777] flex items-center pl-[6px] gap-[9px]">
        <svg class="size-5" viewBox="0 0 20 20"><circle cx="9" cy="9" r="8" stroke="#666" stroke-width="2"/><path d="M15 15L20 20" stroke="#666" stroke-width="2"/></svg>
        <input type="search" aria-label="Search Project Map" placeholder="Search Project Map" class="flex-1 min-w-0 outline-none placeholder:text-[#6b6b6b]">
      </label>

      <div class="flex-1 min-h-0 flex mt-[3px]">
        <ul class="flex-1 min-w-0 bg-white overflow-hidden">
          <li class="h-8 flex items-center gap-1 pl-[60px] bg-[#d9d9d9] font-bold"><svg class="w-7 h-6 shrink-0"><use href="#story"/></svg>4. 105CHS-13_Third</li>
          <li class="h-8 flex items-center gap-1 pl-[60px]"><svg class="w-7 h-6 shrink-0"><use href="#story"/></svg>3. 105CHS-12_Second</li>
          <li class="h-8 flex items-center gap-1 pl-[60px]"><svg class="w-7 h-6 shrink-0"><use href="#story"/></svg>2. 105CHS-11_First Floor</li>
          <li class="h-8 flex items-center gap-1 pl-[60px]"><svg class="w-7 h-6 shrink-0"><use href="#story"/></svg>1. 105CHS-10.5_Lower</li>
          <li class="h-8 flex items-center gap-1 pl-[60px]"><svg class="w-7 h-6 shrink-0"><use href="#story"/></svg>0. 105CHS-10_Ground</li>
          <li class="h-8 flex items-center gap-1 pl-[60px]"><svg class="w-7 h-6 shrink-0"><use href="#story"/></svg>-1. 105CHS-09_Basement</li>
          <li class="h-8 flex items-center gap-[5px] pl-[26px]"><svg class="w-[9px] h-[6px] mr-[5px]" viewBox="0 0 9 6"><path d="M0 1L4 5L8 1" stroke-width="2"/></svg><svg class="w-[27px] h-[21px] fill-[#ececec]"><use href="#section"/></svg>Sections</li>
          <li class="h-8 flex items-center gap-1 pl-[60px]"><svg class="w-7 h-[21px] shrink-0"><use href="#section"/></svg>S-01 A (Auto-rebuild</li>
          <li class="h-8 flex items-center gap-1 pl-[60px]"><svg class="w-7 h-[21px] shrink-0"><use href="#section"/></svg>S-02 B (Auto-rebuild</li>
          <li class="h-8 flex items-center gap-1 pl-[60px]"><svg class="w-7 h-[21px] shrink-0"><use href="#section"/></svg>S-16 Building Section</li>
          <li class="h-8 flex items-center gap-1 pl-[60px]"><svg class="w-7 h-[21px] shrink-0"><use href="#section"/></svg>S-17 Building Section</li>
          <li class="h-8 flex items-center gap-1 pl-[60px]"><svg class="w-7 h-[21px] shrink-0"><use href="#section"/></svg>S-18 C (Independent)</li>
          <li class="h-8 flex items-center gap-[5px] pl-[45px]"><svg class="w-[27px] h-[21px]" viewBox="0 0 28 22"><path d="M0 8L14 1L28 8M3 7V20H25V7" fill="#ececec" stroke-width="2"/></svg>Elevations</li>
          <li class="h-8 flex items-center gap-[5px] pl-[45px]"><svg class="w-[27px] h-[22px]" viewBox="0 0 27 22"><rect x="1" y="1" width="25" height="20" rx="1" fill="#ececec" stroke-width="2"/><path d="M5 21V6H11V21M16 6H22V12H16Z" stroke-width="2"/></svg>Interior Elevations</li>
          <li class="h-8 flex items-center gap-[5px] pl-[26px]"><svg class="w-[9px] h-[6px] mr-[5px]" viewBox="0 0 9 6"><path d="M0 1L4 5L8 1" stroke-width="2"/></svg><svg class="w-[27px] h-[22px] fill-[#ececec]"><use href="#sheet"/></svg>Worksheets</li>
          <li class="h-8 flex items-center gap-1 pl-[60px]"><svg class="w-7 h-[22px] shrink-0"><use href="#sheet"/></svg>00 Legend Finishes Pl</li>
        </ul>
        <div class="w-[10px] shrink-0 pl-px flex flex-col items-end justify-between overflow-hidden">
          <svg class="w-[7px] h-[14px] mt-2 -mb-3" viewBox="0 0 7 14"><path d="M1 5L5 1L9 5" stroke="#555" stroke-width="2"/></svg>
          <div class="w-full flex-1 pt-[29px]"><div class="w-full h-[109px] bg-[#cdcdcd]"></div></div>
          <svg class="w-[7px] h-3" viewBox="0 0 7 12"><path d="M1 1L5 5L9 1" stroke="#555" stroke-width="2"/></svg>
        </div>
      </div>

      <div class="h-[15px] shrink-0 flex items-center pl-[5px] pr-[15px]">
        <svg class="w-[6px] h-2" viewBox="0 0 6 8"><path d="M5 0L1 4L5 8" stroke="#444" stroke-width="2"/></svg>
        <div class="w-[83px] h-full bg-[#cdcdcd] ml-[6px]"></div>
        <svg class="w-[6px] h-2 ml-auto" viewBox="0 0 6 8"><path d="M1 0L5 4L1 8" stroke="#444" stroke-width="2"/></svg>
      </div>

      <div class="h-[52px] shrink-0 flex items-center gap-6 pl-4">
        <button aria-label="New"><svg class="size-5" viewBox="0 0 20 20"><path d="M10 5V15M5 10H15" stroke="#2f6fd0" stroke-width="2"/><circle cx="10" cy="10" r="9" stroke="#2f6fd0" stroke-width="2"/></svg></button>
        <button aria-label="Settings dialog"><svg class="w-[22px] h-[17px]" viewBox="0 0 22 17"><rect x="1" y="1" width="20" height="15" rx="1" fill="#e8f0fc" stroke="#2f80f5" stroke-width="2"/><path d="M1 3H21M5 8H7M9 8H17M5 12H7M9 12H17" stroke="#2f6fd0" stroke-width="2"/></svg></button>
        <button aria-label="Delete"><svg class="w-[21px] h-[23px]" viewBox="0 0 21 23"><path d="M1 2L20 21M19 1L1 21" stroke="#f8481c" stroke-width="3"/></svg></button>
      </div>
      <h2 class="h-[33px] shrink-0 ml-[3px] bg-[#d6d6d6] rounded-l-sm flex items-center pl-[11px] gap-[15px]"><svg class="w-[10px] h-[6px]"><use href="#down"/></svg>Properties</h2>
      <div class="h-[29px] shrink-0 mt-[5px] flex items-center pl-[7px]">
        <svg class="w-5 h-[17px]" viewBox="0 0 20 17"><path d="M1 2Q1 1 2 1H9L11 6H19V15Q19 16 18 16H2Q1 16 1 15ZM4 4H7" stroke-width="2"/></svg>
        <label for="storyName" class="w-[66px] pl-[6px]">4.</label>
        <input id="storyName" type="text" value="105CHS-13_Third Floor" class="flex-1 min-w-0 h-full bg-white border border-r-0 border-[#777] pl-[5px]">
      </div>
      <button class="h-[33px] shrink-0 mt-1 ml-1 bg-[#e1e1e1] border border-r-0 border-[#adadad]">Settings...</button>
    </aside>
  </div>
</body>
</html>
